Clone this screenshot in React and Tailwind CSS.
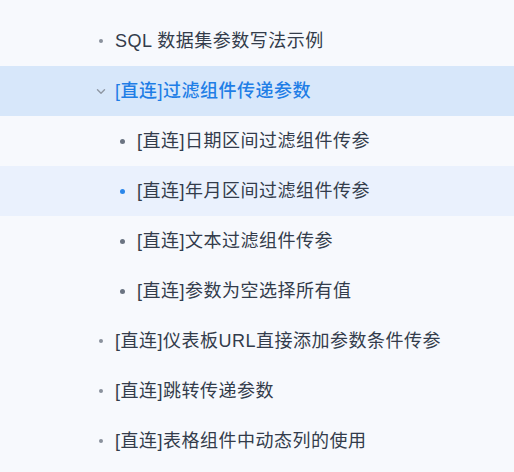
import React from 'react';

const items = [
  {title: 'SQL 数据集参数写法示例', level: 0},
  {title: '[直连]过滤组件传递参数', level: 0, open: true, active: true},
  {title: '[直连]日期区间过滤组件传参', level: 1},
  {title: '[直连]年月区间过滤组件传参', level: 1, hover: true},
  {title: '[直连]文本过滤组件传参', level: 1},
  {title: '[直连]参数为空选择所有值', level: 1},
  {title: '[直连]仪表板URL直接添加参数条件传参', level: 0},
  {title: '[直连]跳转传递参数', level: 0},
  {title: '[直连]表格组件中动态列的使用', level: 0}
];

const Chevron = () => (
  <svg width="10" height="7" viewBox="0 0 10 7" fill="none">
    <path
      d="M1.5 1.8 L5 5.2 L8.5 1.8"
      stroke="#8f97a3"
      strokeWidth="1.4"
      strokeLinecap="round"
      strokeLinejoin="round"
    />
  </svg>
);

const Row = ({item}) => {
  const {title, level, open, active, hover} = item;
  let rowClass = 'flex items-center h-[50px]';
  if (active) rowClass += ' bg-[#d7e7fa]';
  else if (hover) rowClass += ' bg-[#eaf1fd]';

  let marker;
  if (open) marker = <Chevron />;
  else if (level === 0)
    marker = <span className="block w-[4px] h-[4px] rounded-full bg-[#8a919c]" />;
  else
    marker = (
      <span
        className={`block w-[5px] h-[5px] rounded-full ${hover ? 'bg-[#2a86ea]' : 'bg-[#6b7482]'}`}
      />
    );

  return (
    <div className={rowClass}>
      <div
        className={`flex items-center ${level === 0 ? 'pl-[94px]' : 'pl-[115px]'}`}>
        <span className="flex w-[14px] justify-center items-center">{marker}</span>
        <span
          className={`${level === 0 ? 'ml-[7px]' : 'ml-[8px]'} text-[18px] tracking-[0.5px] leading-none whitespace-nowrap ${
            active ? 'text-[#1f7ee6] font-medium' : 'text-[#333c4b]'
          }`}>
          {title}
        </span>
      </div>
    </div>
  );
};

export default function App() {
  return (
    <div
      className="w-[514px] h-[472px] overflow-hidden bg-[#f7f9fd] pt-[16px]"
      style={{fontFamily: '"Liberation Sans", "Noto Sans CJK SC", sans-serif'}}>
      {items.map(item => (
        <Row key={item.title} item={item} />
      ))}
    </div>
  );
}
